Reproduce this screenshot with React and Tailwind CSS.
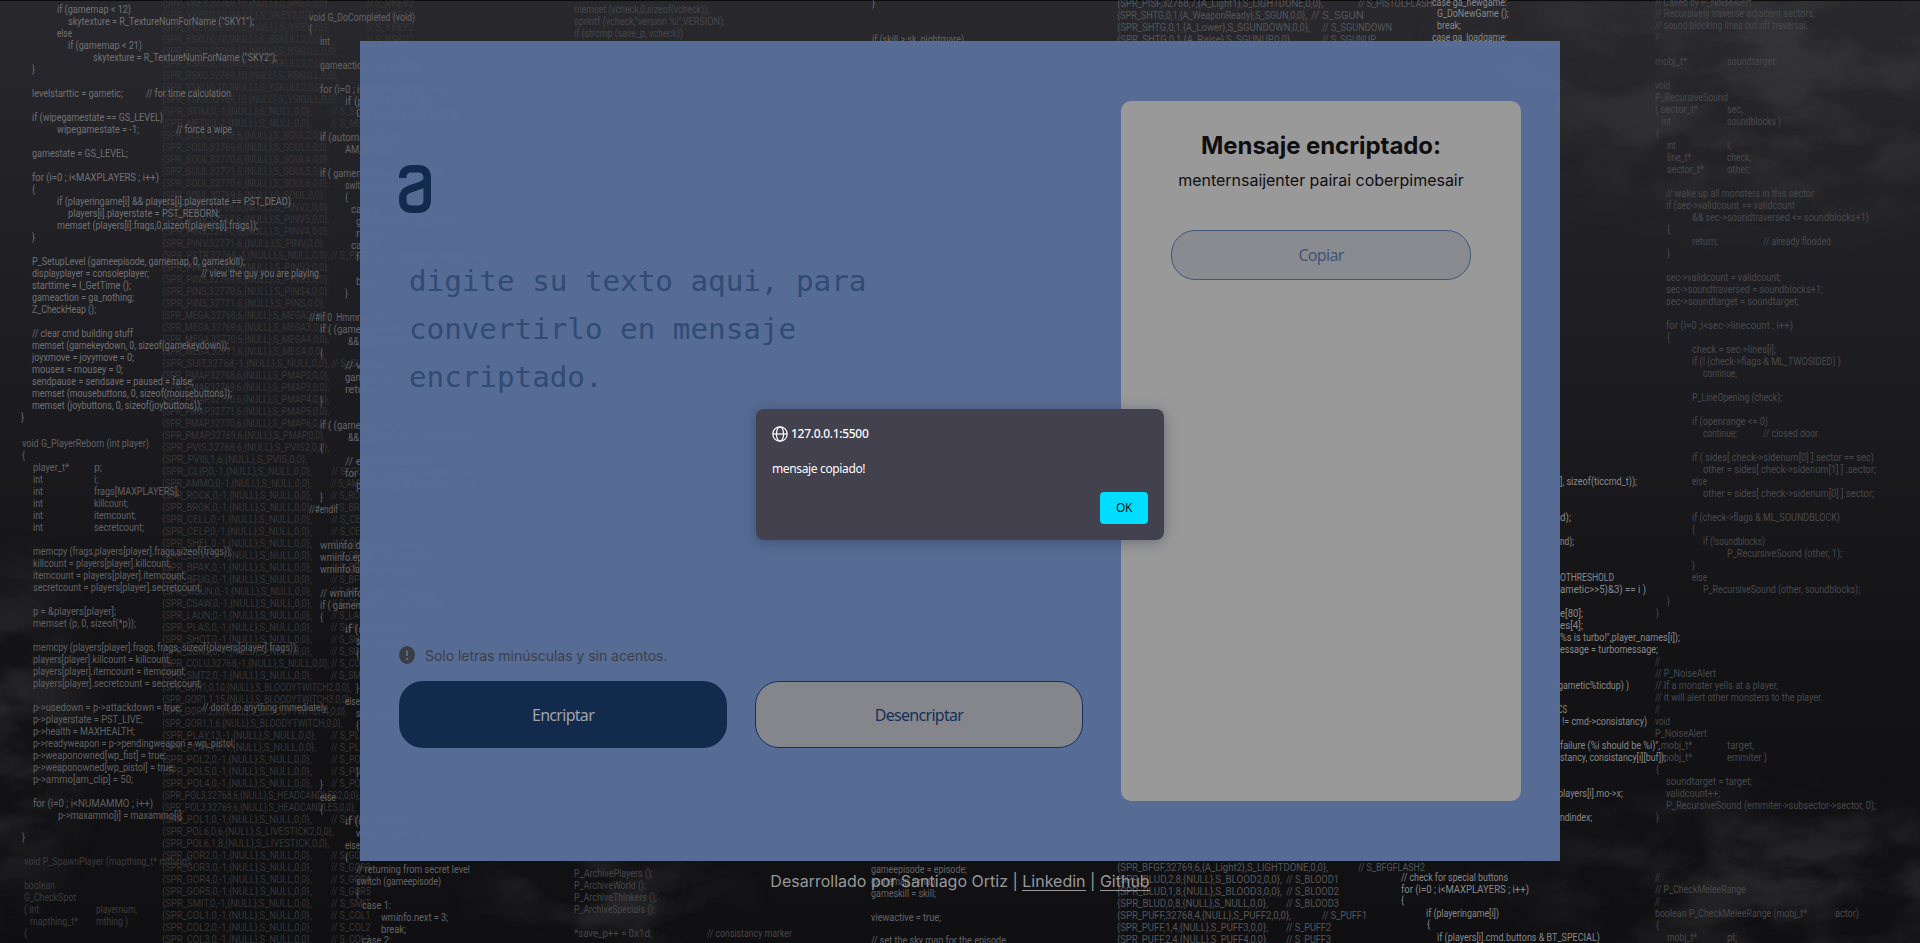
import React from "react";

// Source listings drawn on the wallpaper: [left, right, vertical centre, text].
// A right edge of 0 means the width follows from the number of characters.
const mainListing = [
  [57, 131, 9.5, "if (gamemap < 12)"],
  [68, 254, 21.7, 'skytexture = R_TextureNumForName ("SKY1");'],
  [57, 72, 33.7, "else"],
  [68, 142, 45.7, "if (gamemap < 21)"],
  [93, 277, 57.7, 'skytexture = R_TextureNumForName ("SKY2");'],
  [32, 35, 69.3, "}"],
  [32, 123, 93.7, "levelstarttic = gametic;"],
  [146, 231, 93.7, "// for time calculation"],
  [32, 163, 117.7, "if (wipegamestate == GS_LEVEL)"],
  [57, 139, 129.7, "wipegamestate = -1;"],
  [176, 232, 129.7, "// force a wipe"],
  [32, 128, 153.7, "gamestate = GS_LEVEL;"],
  [32, 159, 177.7, "for (i=0 ; i<MAXPLAYERS ; i++)"],
  [32, 35, 189.3, "{"],
  [57, 291, 201.7, "if (playeringame[i] && players[i].playerstate == PST_DEAD)"],
  [68, 220, 213.7, "players[i].playerstate = PST_REBORN;"],
  [57, 258, 225.7, "memset (players[i].frags,0,sizeof(players[i].frags));"],
  [32, 35, 237.3, "}"],
  [32, 245, 261.7, "P_SetupLevel (gameepisode, gamemap, 0, gameskill);"],
  [32, 149, 273.7, "displayplayer = consoleplayer;"],
  [201, 319, 273.7, "// view the guy you are playing"],
  [32, 131, 285.7, "starttime = I_GetTime ();"],
  [32, 134, 297.7, "gameaction = ga_nothing;"],
  [32, 96, 309.7, "Z_CheckHeap ();"],
  [32, 133, 333.7, "// clear cmd building stuff"],
  [32, 229, 345.7, "memset (gamekeydown, 0, sizeof(gamekeydown));"],
  [32, 134, 357.7, "joyxmove = joyymove = 0;"],
  [32, 123, 369.7, "mousex = mousey = 0;"],
  [32, 194, 381.7, "sendpause = sendsave = paused = false;"],
  [32, 232, 393.7, "memset (mousebuttons, 0, sizeof(mousebuttons));"],
  [32, 202, 405.7, "memset (joybuttons, 0, sizeof(joybuttons));"],
  [21, 24, 417.3, "}"],
];

const rebornListing = [
  [22, 149, 443.7, "void G_PlayerReborn (int player)"],
  [22, 25, 455.3, "{"],
  [33, 69, 467.7, "player_t*"], [94, 102, 467.7, "p;"],
  [33, 43, 479.7, "int"], [94, 98, 479.7, "i;"],
  [33, 43, 491.7, "int"], [94, 179, 491.7, "frags[MAXPLAYERS];"],
  [33, 43, 503.7, "int"], [94, 128, 503.7, "killcount;"],
  [33, 43, 515.7, "int"], [94, 136, 515.7, "itemcount;"],
  [33, 43, 527.7, "int"], [94, 144, 527.7, "secretcount;"],
  [33, 232, 551.7, "memcpy (frags,players[player].frags,sizeof(frags));"],
  [33, 171, 563.7, "killcount = players[player].killcount;"],
  [33, 186, 575.7, "itemcount = players[player].itemcount;"],
  [33, 202, 587.7, "secretcount = players[player].secretcount;"],
  [33, 116, 611.7, "p = &players[player];"],
  [33, 136, 623.7, "memset (p, 0, sizeof(*p));"],
  [33, 298, 647.7, "memcpy (players[player].frags, frags, sizeof(players[player].frags));"],
  [33, 171, 659.7, "players[player].killcount = killcount;"],
  [33, 186, 671.7, "players[player].itemcount = itemcount;"],
  [33, 202, 683.7, "players[player].secretcount = secretcount;"],
  [33, 182, 707.7, "p->usedown = p->attackdown = true;"],
  [202, 327, 707.7, "// don't do anything immediately"],
  [33, 143, 719.7, "p->playerstate = PST_LIVE;"],
  [33, 135, 731.7, "p->health = MAXHEALTH;"],
  [33, 235, 743.7, "p->readyweapon = p->pendingweapon = wp_pistol;"],
  [33, 166, 755.7, "p->weaponowned[wp_fist] = true;"],
  [33, 175, 767.7, "p->weaponowned[wp_pistol] = true;"],
  [33, 133, 779.7, "p->ammo[am_clip] = 50;"],
  [33, 153, 803.7, "for (i=0 ; i<NUMAMMO ; i++)"],
  [58, 183, 815.7, "p->maxammo[i] = maxammo[i];"],
  [22, 25, 838, "}"],
];

const spawnListing = [
  [24, 192, 861.7, "void P_SpawnPlayer (mapthing_t* mthing);"],
  [24, 55, 885.7, "boolean"],
  [24, 76, 897.7, "G_CheckSpot"],
  [24, 39, 909.7, "( int"], [96, 137, 909.7, "playernum,"],
  [30, 78, 921.7, "mapthing_t*"], [96, 128, 921.7, "mthing )"],
  [24, 27, 933.7, "{"],
];

const completedListing = [
  [309, 415, 17.3, "void G_DoCompleted (void)"],
  [309, 312, 29.3, "{"],
  [320, 330, 41.3, "int"],
  [320, 422, 65.7, "gameaction = ga_nothing;"],
  [320, 447, 89.7, "for (i=0 ; i<MAXPLAYERS ; i++)"],
  [345, 0, 101.7, "if (playeringame[i])"],
  [356, 0, 113.7, "G_PlayerFinishLevel (i);"],
  [320, 0, 137.7, "if (automapactive)"],
  [345, 0, 149.7, "AM_Stop ();"],
  [320, 0, 173.7, "if ( gamemode != commercial)"],
  [345, 0, 185.7, "switch(gamemap)"],
  [345, 348, 197.3, "{"],
  [351, 0, 209.7, "case 8:"],
  [356, 0, 221.7, "gameaction = ga_victory;"],
  [356, 0, 233.7, "return;"],
  [351, 0, 245.7, "case 9:"],
  [356, 0, 257.7, "for (i=0 ; i<MAXPLAYERS ; i++)"],
  [356, 0, 281.3, "break;"],
  [345, 348, 293.3, "}"],
  [309, 390, 317.7, "//#if 0  Hmmm - why?"],
  [320, 0, 329.7, "if ( (gamemap == 8)"],
  [348, 0, 341.7, "&& (gamemode != commercial) )"],
  [320, 323, 353.3, "{"],
  [345, 0, 365.7, "// victory"],
  [345, 0, 377.7, "gameaction = ga_victory;"],
  [345, 0, 389.7, "return;"],
  [320, 323, 401.3, "}"],
  [320, 0, 425.7, "if ( (gamemap == 9)"],
  [348, 0, 437.7, "&& (gamemode != commercial) )"],
  [320, 323, 448.5, "{"],
  [345, 0, 461.7, "// exit secret level"],
  [345, 0, 473.7, "for (i=0 ; i<MAXPLAYERS ; i++)"],
  [356, 0, 485.7, "players[i].didsecret = true;"],
  [320, 323, 497.3, "}"],
  [309, 338, 509.7, "//#endif"],
  [320, 0, 545.7, "wminfo.didsecret = true;"],
  [320, 0, 557.7, "wminfo.epsd = gameepisode -1;"],
  [320, 0, 569.7, "wminfo.last = gamemap -1;"],
  [320, 0, 593.7, "// wminfo.next is 0 biased"],
  [320, 0, 605.7, "if ( gamemode == commercial)"],
  [320, 323, 617.3, "{"],
  [345, 0, 629.7, "if (secretexit)"],
  [356, 0, 641.7, "switch(gamemap)"],
  [356, 359, 653.3, "{"],
  [356, 359, 688.3, "}"],
  [345, 360, 701.7, "else"],
  [356, 0, 713.7, "switch(gamemap)"],
  [356, 359, 725.3, "{"],
  [356, 359, 772.5, "}"],
  [320, 323, 785, "}"],
  [320, 336, 797.7, "else"],
  [320, 323, 809.3, "{"],
  [345, 0, 821.7, "if (secretexit)"],
  [356, 0, 833.7, "wminfo.next = 8;"],
  [345, 360, 845.7, "else"],
  [345, 348, 857.3, "{"],
  [356, 470, 869.7, "// returning from secret level"],
  [356, 441, 881.7, "switch (gameepisode)"],
  [356, 359, 893.3, "{"],
  [362, 391, 905.7, "case 1:"],
  [381, 448, 917.7, "wminfo.next = 3;"],
  [381, 406, 929.7, "break;"],
  [362, 391, 940.3, "case 2:"],
  [871, 967, 869.3, "gameepisode = episode;"],
  [871, 937, 881.3, "gamemap = map;"],
  [871, 936, 893.3, "gameskill = skill;"],
  [871, 941, 917.3, "viewactive = true;"],
  [871, 1006, 940.3, "// set the sky map for the episode"],
  [872, 875, 4, "}"],
  [872, 964, 39.3, "if (skill > sk_nightmare)"],
];

const archiveListing = [
  [574, 709, 9.7, "memset (vcheck,0,sizeof(vcheck));"],
  [574, 725, 21.7, 'sprintf (vcheck,"version %i",VERSION);'],
  [574, 683, 33.7, "if (strcmp (save_p, vcheck))"],
  [574, 653, 873.7, "P_ArchivePlayers ();"],
  [574, 646, 885.7, "P_ArchiveWorld ();"],
  [574, 657, 897.7, "P_ArchiveThinkers ();"],
  [574, 655, 909.7, "P_ArchiveSpecials ();"],
  [574, 652, 934, "*save_p++ = 0x1d;"],
  [707, 792, 934, "// consistancy marker"],
];

const spriteListing = [
  [1117, 1323, 4, "{SPR_PISF,32768,7,{A_Light1},S_LIGHTDONE,0,0},"],
  [1358, 1433, 4, "// S_PISTOLFLASH"],
  [1117, 1307, 15.5, "{SPR_SHTG,0,1,{A_WeaponReady},S_SGUN,0,0},"],
  [1311, 1364, 15.5, "// S_SGUN"],
  [1117, 1310, 27.3, "{SPR_SHTG,0,1,{A_Lower},S_SGUNDOWN,0,0},"],
  [1322, 1392, 27.3, "// S_SGUNDOWN"],
  [1117, 1292, 39.3, "{SPR_SHTG,0,1,{A_Raise},S_SGUNUP,0,0},"],
  [1322, 1376, 39.3, "// S_SGUNUP"],
  [1117, 1328, 867.3, "{SPR_BFGF,32769,6,{A_Light2},S_LIGHTDONE,0,0},"],
  [1358, 1425, 867.3, "// S_BFGFLASH2"],
  [1117, 1282, 879.3, "{SPR_BLUD,2,8,{NULL},S_BLOOD2,0,0},"],
  [1286, 1339, 879.3, "// S_BLOOD1"],
  [1117, 1282, 891.3, "{SPR_BLUD,1,8,{NULL},S_BLOOD3,0,0},"],
  [1286, 1339, 891.3, "// S_BLOOD2"],
  [1117, 1268, 903.3, "{SPR_BLUD,0,8,{NULL},S_NULL,0,0},"],
  [1286, 1339, 903.3, "// S_BLOOD3"],
  [1117, 1291, 915.3, "{SPR_PUFF,32768,4,{NULL},S_PUFF2,0,0},"],
  [1322, 1367, 915.3, "// S_PUFF1"],
  [1117, 1268, 927.3, "{SPR_PUFF,1,4,{NULL},S_PUFF3,0,0},"],
  [1286, 1331, 927.3, "// S_PUFF2"],
  [1117, 1268, 939.3, "{SPR_PUFF,2,4,{NULL},S_PUFF4,0,0},"],
  [1286, 1331, 939.3, "// S_PUFF3"],
];

const tickerListing = [
  [1432, 1507, 2.7, "case ga_newgame:"],
  [1437, 1509, 13.7, "G_DoNewGame ();"],
  [1437, 1461, 25.7, "break;"],
  [1432, 1507, 38, "case ga_loadgame:"],
  [1401, 1508, 877.3, "// check for special buttons"],
  [1401, 1529, 889.5, "for (i=0 ; i<MAXPLAYERS ; i++)"],
  [1401, 1404, 901, "{"],
  [1426, 1499, 913.3, "if (playeringame[i])"],
  [1427, 1430, 925, "{"],
  [1437, 1600, 937.5, "if (players[i].cmd.buttons & BT_SPECIAL)"],
  [1560, 1637, 481.7, "], sizeof(ticcmd_t));"],
  [1560, 1571, 517.7, "d);"],
  [1560, 1574, 541.7, "nd);"],
  [1560, 1614, 577.7, "OTHRESHOLD"],
  [1560, 1646, 589.7, "ametic>>5)&3) == i )"],
  [1560, 1583, 613.7, "e[80];"],
  [1560, 1583, 625.7, "es[4];"],
  [1560, 1680, 637.7, '%s is turbo!",player_names[i]);'],
  [1560, 1658, 649.7, "essage = turbomessage;"],
  [1558, 1629, 685.7, "gametic%ticdup) )"],
  [1558, 1567, 709.7, "CS"],
  [1562, 1647, 721.7, "!= cmd->consistancy)"],
  [1560, 1660, 745.7, 'failure (%i should be %i)",'],
  [1560, 1666, 757.7, "stancy, consistancy[i][buf]);"],
  [1558, 1623, 793.7, "players[i].mo->x;"],
  [1560, 1592, 817.7, "ndindex;"],
];

const soundListing = [
  [1655, 1754, 2.5, "// Called by P_NoiseAlert."],
  [1655, 1815, 13.7, "// Recursively traverse adjacent sectors,"],
  [1655, 1808, 25.7, "// sound blocking lines cut off traversal."],
  [1655, 1660, 37.3, "//"],
  [1655, 1687, 61.7, "mobj_t*"], [1727, 1777, 61.7, "soundtarget;"],
  [1655, 1670, 85.7, "void"],
  [1655, 1728, 97.7, "P_RecursiveSound"],
  [1655, 1698, 109.7, "( sector_t*"], [1727, 1743, 109.7, "sec,"],
  [1661, 1671, 121.7, "int"], [1727, 1781, 121.7, "soundblocks )"],
  [1656, 1659, 133.3, "{"],
  [1667, 1676, 145.7, "int"], [1727, 1731, 145.7, "i;"],
  [1667, 1691, 157.7, "line_t*"], [1727, 1751, 157.7, "check;"],
  [1667, 1704, 169.7, "sector_t*"], [1727, 1750, 169.7, "other;"],
  [1666, 1814, 193.7, "// wake up all monsters in this sector"],
  [1666, 1795, 205.7, "if (sec->validcount == validcount"],
  [1692, 1869, 217.7, "&& sec->soundtraversed <= soundblocks+1)"],
  [1667, 1670, 229.3, "{"],
  [1692, 1718, 241.7, "return;"], [1763, 1831, 241.7, "// already flooded"],
  [1667, 1670, 253.3, "}"],
  [1666, 1781, 277.7, "sec->validcount = validcount;"],
  [1666, 1823, 289.7, "sec->soundtraversed = soundblocks+1;"],
  [1666, 1799, 301.7, "sec->soundtarget = soundtarget;"],
  [1666, 1793, 325.7, "for (i=0 ;i<sec->linecount ; i++)"],
  [1667, 1670, 337.3, "{"],
  [1692, 1776, 349.7, "check = sec->lines[i];"],
  [1692, 1841, 361.7, "if (! (check->flags & ML_TWOSIDED) )"],
  [1703, 1737, 373.7, "continue;"],
  [1692, 1782, 397.7, "P_LineOpening (check);"],
  [1692, 1768, 421.7, "if (openrange <= 0)"],
  [1703, 1737, 433.7, "continue;"], [1763, 1818, 433.7, "// closed door"],
  [1692, 1874, 457.7, "if ( sides[ check->sidenum[0] ].sector == sec)"],
  [1703, 1876, 469.7, "other = sides[ check->sidenum[1] ] .sector;"],
  [1692, 1707, 481.7, "else"],
  [1703, 1874, 493.7, "other = sides[ check->sidenum[0] ].sector;"],
  [1692, 1840, 517.7, "if (check->flags & ML_SOUNDBLOCK)"],
  [1692, 1695, 529.3, "{"],
  [1703, 1765, 541.7, "if (!soundblocks)"],
  [1727, 1842, 553.7, "P_RecursiveSound (other, 1);"],
  [1692, 1695, 565.3, "}"],
  [1692, 1707, 577.7, "else"],
  [1703, 1860, 589.7, "P_RecursiveSound (other, soundblocks);"],
  [1667, 1670, 601.3, "}"],
  [1656, 1659, 613.3, "}"],
  [1655, 1660, 661.7, "//"],
  [1655, 1716, 673.7, "// P_NoiseAlert"],
  [1655, 1778, 685.7, "// If a monster yells at a player,"],
  [1655, 1823, 697.7, "// it will alert other monsters to the player."],
  [1655, 1660, 709.7, "//"],
  [1655, 1670, 721.7, "void"],
  [1655, 1707, 733.7, "P_NoiseAlert"],
  [1661, 1692, 745.7, "mobj_t*"], [1727, 1754, 745.7, "target,"],
  [1661, 1692, 757.7, "mobj_t*"], [1727, 1767, 757.7, "emmiter )"],
  [1656, 1659, 769.3, "{"],
  [1666, 1752, 781.7, "soundtarget = target;"],
  [1666, 1720, 793.7, "validcount++;"],
  [1666, 1876, 805.7, "P_RecursiveSound (emmiter->subsector->sector, 0);"],
  [1656, 1659, 818, "}"],
  [1655, 1660, 877.3, "//"],
  [1655, 1746, 889.7, "// P_CheckMeleeRange"],
  [1655, 1660, 901.7, "//"],
  [1655, 1807, 913.7, "boolean P_CheckMeleeRange (mobj_t*"],
  [1835, 1859, 913.7, "actor)"],
  [1656, 1659, 925.3, "{"],
  [1667, 1697, 937.7, "mobj_t*"], [1727, 1737, 937.7, "pl;"],
];

// Sprite state table: "name,frame,tics,next"; a bare name is a static sprite.
const states = (
  "RKEY,32769,10,RKEY YKEY,0,10,YKEY2 YKEY,32769,10,YKEY BSKU,0,10,BSKULL2 BSKU,32769,10,BSKULL " +
  "RSKU,0,10,RSKULL2 RSKU,32769,10,RSKULL YSKU,0,10,YSKULL2 YSKU,32769,10,YSKULL STIM MEDI " +
  "SOUL,32768,6,SOUL2 SOUL,32769,6,SOUL3 SOUL,32770,6,SOUL4 SOUL,32771,6,SOUL5 SOUL,32770,6,SOUL6 SOUL,32769,6,SOUL " +
  "PINV,32768,6,PINV2 PINV,32769,6,PINV3 PINV,32770,6,PINV4 PINV,32771,6,PINV PSTR,32768,-1,NULL " +
  "PINS,32768,6,PINS2 PINS,32769,6,PINS3 PINS,32770,6,PINS4 PINS,32771,6,PINS " +
  "MEGA,32768,6,MEGA2 MEGA,32769,6,MEGA3 MEGA,32770,6,MEGA4 MEGA,32771,6,MEGA SUIT,32768,-1,NULL " +
  "PMAP,32768,6,PMAP2 PMAP,32769,6,PMAP3 PMAP,32770,6,PMAP4 PMAP,32771,6,PMAP5 PMAP,32770,6,PMAP6 PMAP,32769,6,PMAP " +
  "PVIS,32768,6,PVIS2 PVIS,1,6,PVIS CLIP AMMO ROCK BROK CELL CELP SHEL SBOX BPAK BFUG MGUN CSAW LAUN PLAS SHOT SGN2 " +
  "COLU,32768,-1,NULL SMT2 GOR1,0,10,BLOODYTWITCH2 GOR1,1,15,BLOODYTWITCH3 GOR1,2,8,BLOODYTWITCH4 GOR1,1,6,BLOODYTWITCH " +
  "PLAY,13,-1,NULL PLAY,18,-1,NULL POL2 POL5 POL4 POL3,32768,6,HEADCANDLES2 POL3,32769,6,HEADCANDLES POL1 " +
  "POL6,0,6,LIVESTICK2 POL6,1,8,LIVESTICK GOR2 GOR3 GOR4 GOR5 SMIT COL1 COL2 COL3"
).split(" ");

const stateListing = states.flatMap((entry, row) => {
  const [name, frame = "0", tics = "-1", next = "NULL"] = entry.split(",");
  const y = 3.7 + row * 12;
  const lines = [[162, 0, y, `{SPR_${name},${frame},${tics},{NULL},S_${next},0,0},`]];
  if (next === "NULL") lines.push([331, 0, y, `// S_${name}`]);
  else if (row < 4) lines.push([366, 414, y, `// S_${name}2`]);
  return lines;
});

function Listing({ lines, fill, size = 10 }) {
  return (
    <g fill={fill} fontSize={size}>
      {lines.map(([x, right, y, text], i) => (
        <text
          key={i}
          x={x}
          y={y + 3.4}
          textLength={right ? right - x : text.length * 4.4}
          lengthAdjust="spacingAndGlyphs"
          xmlSpace="preserve"
        >
          {text}
        </text>
      ))}
    </g>
  );
}

function Wallpaper() {
  return (
    <svg
      className="absolute inset-0 h-full w-full"
      viewBox="0 0 1920 943"
      fontFamily="Roboto, sans-serif"
      aria-hidden="true"
    >
      <defs>
        <linearGradient id="base" x1="0" y1="0" x2="0" y2="1">
          <stop offset="0" stopColor="#29292d" />
          <stop offset="0.2" stopColor="#222226" />
          <stop offset="0.45" stopColor="#1b1b1f" />
          <stop offset="0.7" stopColor="#131315" />
          <stop offset="1" stopColor="#101012" />
        </linearGradient>
        <radialGradient id="patch">
          <stop offset="0" stopColor="#fff" />
          <stop offset="0.5" stopColor="#fff" stopOpacity="0.7" />
          <stop offset="1" stopColor="#fff" stopOpacity="0" />
        </radialGradient>
        <filter id="grunge" x="0" y="0" width="100%" height="100%" colorInterpolationFilters="sRGB">
          <feTurbulence type="fractalNoise" baseFrequency="0.012 0.022" numOctaves="8" seed="11" />
          <feColorMatrix values="0 0 0 0 0.215  0 0 0 0 0.215  0 0 0 0 0.225  3.2 0 0 0 -1.15" />
        </filter>
        <mask id="worn">
          <ellipse cx="1770" cy="50" rx="360" ry="210" fill="url(#patch)" />
          <ellipse cx="1800" cy="880" rx="340" ry="110" fill="url(#patch)" opacity="0.7" />
          <ellipse cx="0" cy="730" rx="110" ry="220" fill="url(#patch)" opacity="0.7" />
          <ellipse cx="610" cy="900" rx="160" ry="70" fill="url(#patch)" opacity="0.7" />
        </mask>
      </defs>
      <rect width="1920" height="943" fill="url(#base)" />
      <g mask="url(#worn)">
        <rect width="1920" height="943" filter="url(#grunge)" opacity="0.85" />
      </g>
      <rect width="1920" height="1" fill="#0c0c0d" />
      <Listing lines={stateListing} fill="#353538" />
      <Listing lines={spawnListing} fill="#3b3b3d" />
      <Listing lines={archiveListing} fill="#464649" />
      <Listing lines={soundListing} fill="#48484c" />
      <Listing lines={spriteListing} fill="#555558" />
      <Listing lines={completedListing} fill="#646467" />
      <Listing lines={mainListing} fill="#717174" />
      <Listing lines={rebornListing} fill="#616163" />
      <Listing lines={tickerListing} fill="#88888b" />
    </svg>
  );
}

function Logo() {
  return (
    <svg className="h-12 w-8" viewBox="0 0 32 48" fill="none" stroke="#122b4d" strokeWidth="7.6">
      <path d="M3.8 13V12C3.8 6.500 7 3.800 13 3.800H19C25 3.800 28.200 6.800 28.200 12.500V35.500C28.200 41.300 25 44.200 19 44.200H13C7 44.200 3.800 41.300 3.800 35.500V33C3.800 28 6 25.800 11 24L21 20.500C26 18.700 28.200 17 28.200 13" />
    </svg>
  );
}

function Dialog() {
  return (
    <div className="absolute left-[756px] top-[409px] flex h-[131px] w-[408px] flex-col rounded-lg bg-[#42414d] px-4 pb-4 pt-[17px] font-['Noto_Sans',sans-serif] text-[12px] leading-4 text-[#fbfbfe] shadow-[0_2px_14px_rgba(20,30,60,0.35)]">
      <div className="flex items-center gap-[3px] font-medium">
        <svg className="h-4 w-4" viewBox="0 0 16 16" fill="none" stroke="#fbfbfe" strokeWidth="1.25">
          <circle cx="8" cy="8" r="7.200" />
          <ellipse cx="8" cy="8" rx="3.600" ry="7.200" />
          <path d="M1 8H15" />
        </svg>
        <span className="tracking-[-0.3px]">127.0.0.1:5500</span>
      </div>
      <p className="mt-[19px] tracking-[-0.36px]">mensaje copiado!</p>
      <button className="ml-auto mt-auto h-8 w-12 rounded bg-[#00ddff] tracking-[-0.3px] text-[#15141a]">OK</button>
    </div>
  );
}

export default function App() {
  return (
    <div className="relative h-[943px] w-[1920px] overflow-hidden bg-[#1b1b1f] font-['Inter',sans-serif]">
      <Wallpaper />
      <div className="relative flex h-full flex-col items-center pt-[41px]">
        <main className="flex h-[820px] w-[1200px] shrink-0 bg-[#596e97]/98 pl-[39px] pr-[39px] pt-[60px]">
          <section className="flex w-[684px] flex-col pt-16">
            <Logo />
            <p className="mt-[44px] h-[374px] w-[500px] whitespace-pre pl-[10px] font-['DejaVu_Sans_Mono',monospace] text-[29.23px] leading-[48px] text-[#304b74]">
              {"digite su texto aqui, para\nconvertirlo en mensaje\nencriptado."}
            </p>
            <div className="mt-[10px] flex h-[28px] items-center gap-[10px] text-[14px] tracking-[-0.03px] text-[#3a3f49]">
              <svg className="h-[18px] w-4" viewBox="0 0 16 18">
                <ellipse cx="8" cy="9" rx="8" ry="9" fill="#3a3d44" />
                <path d="M8 4.500V10M8 12V14" stroke="#596e97" strokeWidth="1.800" />
              </svg>
              <span>Solo letras minúsculas y sin acentos.</span>
            </div>
            <div className="mt-[12px] flex gap-7 font-['Noto_Sans',sans-serif] text-base tracking-[-0.7px]">
              <button className="h-[67px] w-[328px] rounded-3xl bg-[#122b4d] text-[#a0a3a9]">Encriptar</button>
              <button className="h-[67px] w-[328px] rounded-3xl border border-[#16305a] bg-[#85868c] text-[#15305a]">
                Desencriptar
              </button>
            </div>
          </section>
          <aside className="ml-auto flex h-[700px] w-[400px] flex-col items-center rounded-[10px] bg-[#99999a] pt-[29px] text-[#0f0f11]">
            <h1 className="text-2xl font-bold leading-8 tracking-[-0.06px]">Mensaje encriptado:</h1>
            <p className="mt-[6px] text-base leading-6 tracking-[-0.03px]">menternsaijenter pairai coberpimesair</p>
            <button className="mt-[38px] h-[50px] w-[300px] rounded-3xl border border-[#40587a] bg-[#8a8b90] font-['Noto_Sans',sans-serif] text-base tracking-[-0.7px] text-[#3f5474]">
              Copiar
            </button>
          </aside>
        </main>
        <footer className="mt-2 flex text-base leading-6 text-[#98989b]">
          <span className="whitespace-pre">Desarrollado por Santiago Ortiz | </span>
          <a className="h-[22px] border-b border-[#98989b]">Linkedin</a>
          <span className="whitespace-pre"> | </span>
          <a className="h-[22px] border-b border-[#98989b]">Github</a>
        </footer>
      </div>
      <Dialog />
    </div>
  );
}
